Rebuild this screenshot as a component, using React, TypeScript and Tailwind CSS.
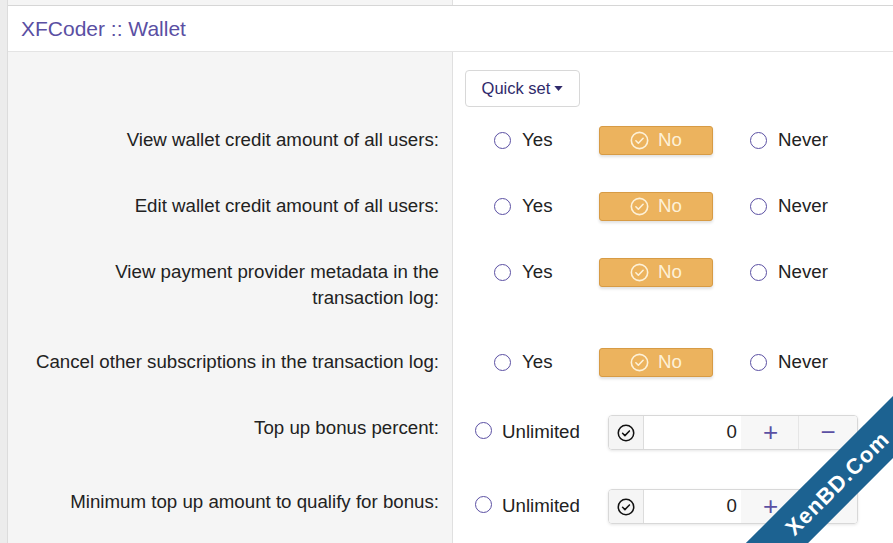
import type { ReactNode } from "react";

const font = { fontFamily: '"Liberation Sans", Arial, sans-serif' };

function Radio() {
  return (
    <span className="inline-block h-[17px] w-[17px] shrink-0 rounded-full border-[1.5px] border-[#5b50a3] bg-white" />
  );
}

function CircleCheck({ className }: { className?: string }) {
  return (
    <svg viewBox="0 0 20 20" className={className} fill="none" stroke="currentColor" strokeWidth="1.7">
      <circle cx="10" cy="10" r="8.6" />
      <path d="M6.2 10.3l2.6 2.6 5-5.2" strokeLinecap="round" strokeLinejoin="round" />
    </svg>
  );
}

function Row({ label, height, children }: { label: ReactNode; height: string; children: ReactNode }) {
  return (
    <div className={`flex ${height}`}>
      <div className="w-[445px] shrink-0 border-r border-[#e0e0e0] bg-[#f5f5f5] pr-[13px] pt-[12px] text-right text-[18.7px] leading-[26px] text-[#222]">
        {label}
      </div>
      <div className="flex-1 bg-white">{children}</div>
    </div>
  );
}

function YesNoNever() {
  return (
    <div className="flex items-center pl-[41px] pt-[11px] text-[18.7px] text-[#222]">
      <label className="flex w-[105px] items-center gap-[11px]">
        <Radio />
        <span>Yes</span>
      </label>
      <div className="flex h-[29px] w-[114px] items-center justify-center gap-[9px] rounded-[3px] border border-[#d79b45] bg-[#ecb35e] text-[#fdf1d8] shadow-[0_2px_3px_rgba(0,0,0,0.12)]">
        <CircleCheck className="h-[19px] w-[19px]" />
        <span>No</span>
      </div>
      <label className="ml-[37px] flex items-center gap-[11px]">
        <Radio />
        <span>Never</span>
      </label>
    </div>
  );
}

function Unlimited() {
  return (
    <div className="flex items-start pl-[22px] pt-[12px] text-[18.7px] text-[#222]">
      <label className="flex w-[133px] items-start gap-[10px]">
        <span className="mt-[4px]">
          <Radio />
        </span>
        <span className="mt-[3px]">Unlimited</span>
      </label>
      <div className="flex h-[35px] w-[250px] overflow-hidden rounded-[4px] border border-[#d8d8d8] shadow-[0_1px_3px_rgba(0,0,0,0.1)]">
        <div className="flex w-[35px] items-center justify-center border-r border-[#dcdcdc] bg-[#f5f5f5] text-[#111]">
          <CircleCheck className="h-[18px] w-[18px]" />
        </div>
        <div className="flex w-[97px] items-center justify-end bg-white pr-[4px] text-[#222]">0</div>
        <div className="flex w-[58px] items-center justify-center border-r border-[#e6e6e6] bg-[#f7f7f7] pl-[2px] text-[26px] text-[#5b50a3]">
          +
        </div>
        <div className="flex flex-1 items-center justify-center bg-[#f7f7f7] text-[26px] text-[#5b50a3]">
          −
        </div>
      </div>
    </div>
  );
}

export default function App() {
  return (
    <div className="relative flex h-[543px] overflow-hidden bg-white" style={font}>
      <div className="w-[8px] shrink-0 border-r border-[#dcdcdc] bg-[#ececec]" />
      <div className="flex flex-1 flex-col">
        <div className="flex h-[6px] border-b border-[#d6d6d6]">
          <div className="w-[445px] border-r border-[#e0e0e0] bg-[#f5f5f5]" />
          <div className="flex-1 bg-white" />
        </div>
        <div className="flex h-[46px] items-center border-b border-[#e4e4e4] bg-white pl-[13px] text-[21px] text-[#5a4fa3]">
          XFCoder :: Wallet
        </div>
        <Row label="" height="h-[63px]">
          <div className="pl-[12px] pt-[18px]">
            <button className="flex h-[37px] w-[115px] items-center justify-center gap-[4px] rounded-[4px] border border-[#d8d8d8] bg-white text-[16.5px] text-[#2f2a6b]">
              Quick set
              <svg viewBox="0 0 10 6" className="h-[5px] w-[9px]" fill="currentColor">
                <path d="M0 0h10L5 6z" />
              </svg>
            </button>
          </div>
        </Row>
        <Row label="View wallet credit amount of all users:" height="h-[66px]">
          <YesNoNever />
        </Row>
        <Row label="Edit wallet credit amount of all users:" height="h-[66px]">
          <YesNoNever />
        </Row>
        <Row
          label={
            <>
              View payment provider metadata in the
              <br />
              transaction log:
            </>
          }
          height="h-[90px]"
        >
          <YesNoNever />
        </Row>
        <Row label="Cancel other subscriptions in the transaction log:" height="h-[66px]">
          <YesNoNever />
        </Row>
        <Row label="Top up bonus percent:" height="h-[74px]">
          <Unlimited />
        </Row>
        <Row label="Minimum top up amount to qualify for bonus:" height="flex-1">
          <Unlimited />
        </Row>
      </div>
      <div className="absolute left-[687px] top-[461px] flex h-[44px] w-[300px] -rotate-45 items-center justify-center bg-[#1c6291] text-[22px] font-bold tracking-[1px] text-white">
        XenBD.Com
      </div>
    </div>
  );
}
